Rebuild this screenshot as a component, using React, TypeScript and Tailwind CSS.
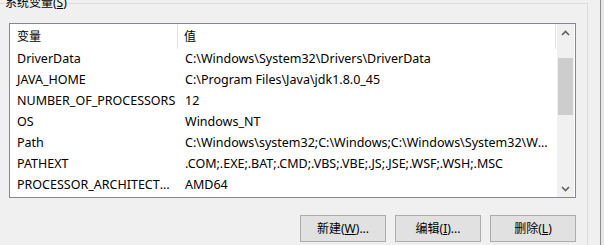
import React from 'react';

const rows: [string, string][] = [
  ['DriverData', 'C:\\Windows\\System32\\Drivers\\DriverData'],
  ['JAVA_HOME', 'C:\\Program Files\\Java\\jdk1.8.0_45'],
  ['NUMBER_OF_PROCESSORS', '12'],
  ['OS', 'Windows_NT'],
  ['Path', 'C:\\Windows\\system32;C:\\Windows;C:\\Windows\\System32\\Wbem;C:\\Windows\\System32\\WindowsPowerShell\\v1.0\\'],
  ['PATHEXT', '.COM;.EXE;.BAT;.CMD;.VBS;.VBE;.JS;.JSE;.WSF;.WSH;.MSC'],
  ['PROCESSOR_ARCHITECTURE', 'AMD64'],
];

const Chevron: React.FC<{ down?: boolean }> = ({ down }) => (
  <svg width="9" height="6" viewBox="0 0 9 6" className={down ? 'rotate-180' : ''}>
    <path d="M1 5 L4.5 1.5 L8 5" fill="none" stroke="#606060" strokeWidth="1.6" />
  </svg>
);

const WinButton: React.FC<{ label: string; hotkey: string; dots?: boolean }> = ({ label, hotkey, dots }) => (
  <button className="w-[86px] h-[27px] bg-[#e1e1e1] border border-[#adadad] text-[12px] text-black flex items-center justify-center">
    {label}(<span className="underline">{hotkey}</span>){dots ? '...' : ''}
  </button>
);

const App: React.FC = () => {
  return (
    <div className="w-[604px] h-[245px] overflow-hidden bg-[#f0f0f0] flex font-['Segoe_UI','Noto_Sans','Noto_Sans_CJK_SC',sans-serif] text-[12px] text-black">
      <div className="w-[600px] h-full">
        <fieldset className="w-[588px] h-[300px] -mt-[4px] border border-l-0 border-b-0 border-[#dcdcdc]">
          <legend className="ml-[4px] px-[1px] leading-[14px]">系统变量(<span className="underline">S</span>)</legend>

          {/* list view */}
          <div className="ml-[9px] mt-[13px] w-[567px] h-[175px] border border-[#828790] bg-white flex">
            <div className="w-[547px] flex flex-col">
              <div className="h-[25px] flex items-center">
                <div className="w-[168px] h-full pl-[7px] flex items-center border-r border-[#e5e5e5]">变量</div>
                <div className="w-[378px] h-full pl-[6px] flex items-center border-r border-[#e5e5e5]">值</div>
              </div>
              {rows.map(([name, value]) => (
                <div key={name} className="h-[21px] flex items-center text-[12.5px]">
                  <div className="w-[168px] pl-[7px] pr-[1px] truncate">{name}</div>
                  <div className="w-[379px] pl-[7px] pr-[3px] truncate">{value}</div>
                </div>
              ))}
            </div>
            {/* scrollbar */}
            <div className="w-[17px] h-full bg-[#f0f0f0] flex flex-col">
              <div className="h-[17px] flex items-center justify-center">
                <Chevron />
              </div>
              <div className="mt-[17px] mx-[1px] h-[57px] bg-[#cdcdcd]" />
              <div className="mt-auto h-[17px] flex items-center justify-center">
                <Chevron down />
              </div>
            </div>
          </div>

          <div className="w-[576px] mt-[17px] flex justify-end gap-[9px]">
            <WinButton label="新建" hotkey="W" dots />
            <WinButton label="编辑" hotkey="I" dots />
            <WinButton label="删除" hotkey="L" />
          </div>
        </fieldset>
      </div>
      <div className="w-[1px] h-full bg-[#8c8c8c]" />
      <div className="flex-1 h-full bg-[#e8e8e8]" />
    </div>
  );
};

export default App;
